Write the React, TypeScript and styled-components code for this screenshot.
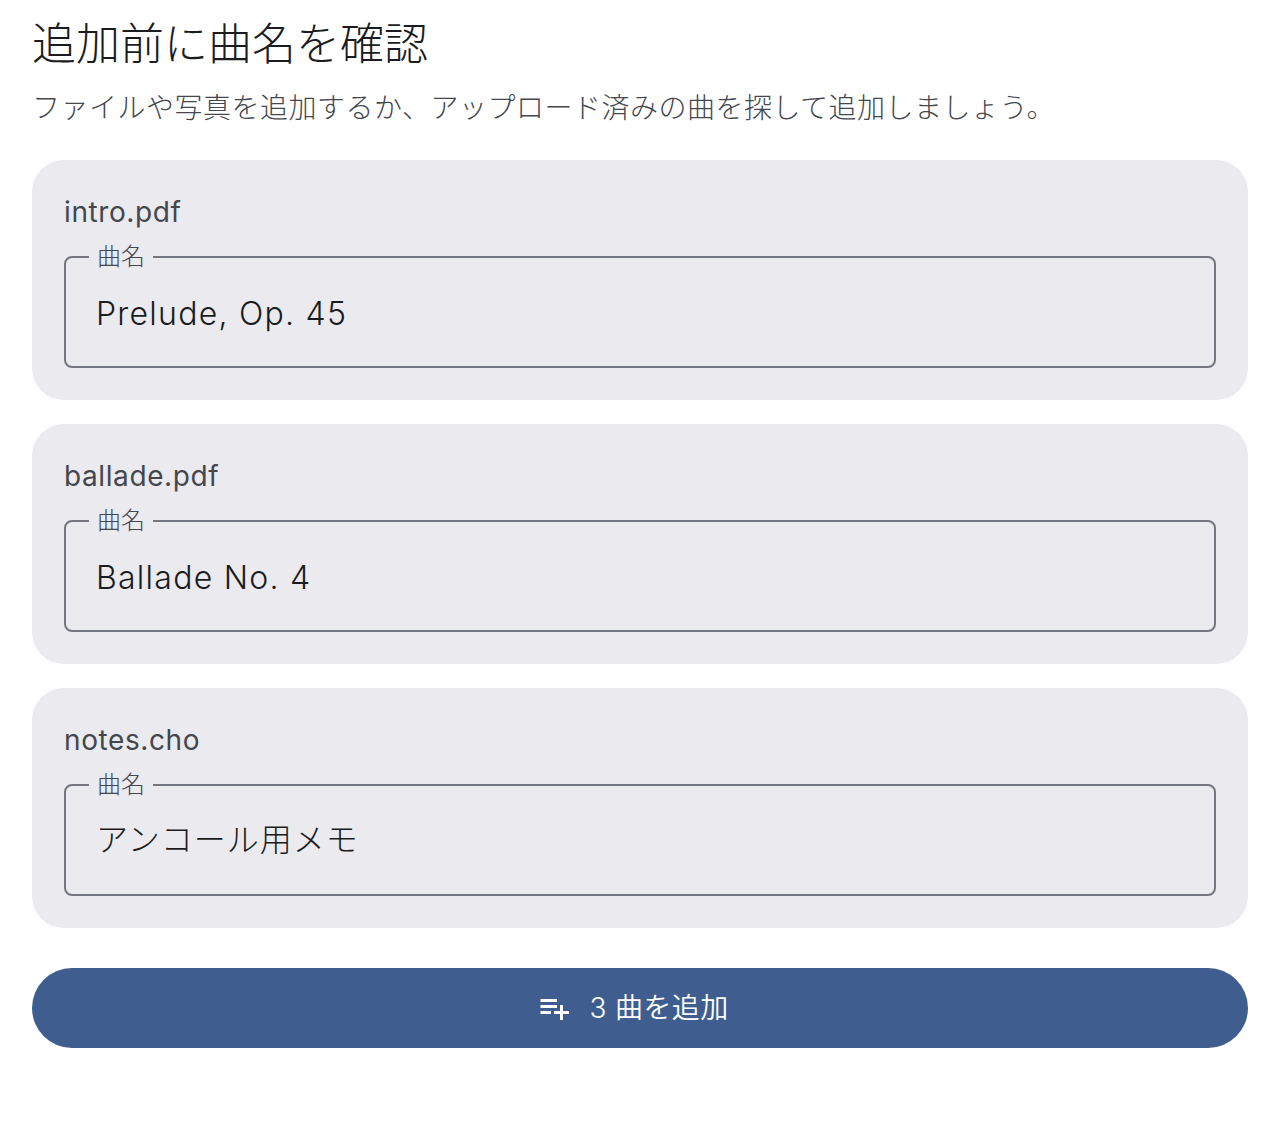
import styled, { createGlobalStyle } from "styled-components";
import { MdPlaylistAdd } from "react-icons/md";

const songs = [
  { file: "intro.pdf", title: "Prelude, Op. 45", cjk: false },
  { file: "ballade.pdf", title: "Ballade No. 4", cjk: false },
  { file: "notes.cho", title: "アンコール用メモ", cjk: true },
];

const App = () => {
  return (
    <Page>
      <GlobalStyle />
      <Title>追加前に曲名を確認</Title>
      <Subtitle>ファイルや写真を追加するか、アップロード済みの曲を探して追加しましょう。</Subtitle>
      <CardList>
        {songs.map((song) => (
          <Card key={song.file}>
            <FileName>{song.file}</FileName>
            <Field>
              <FieldLabel>曲名</FieldLabel>
              <FieldInput $cjk={song.cjk} defaultValue={song.title} aria-label="曲名" />
            </Field>
          </Card>
        ))}
      </CardList>
      <AddButton>
        <MdPlaylistAdd className="icon" />
        <ButtonLabel>3 曲を追加</ButtonLabel>
      </AddButton>
    </Page>
  );
};

export default App;

const GlobalStyle = createGlobalStyle`
  html, body {
    margin: 0;
    padding: 0;
    background: #FFFFFF;
  }
  body {
    font-family: "Inter", "Noto Sans CJK JP", sans-serif;
  }
`;

const Page = styled.main`
  box-sizing: border-box;
  width: 1280px;
  height: 1128px;
  padding: 16px 32px 0;
  font-family: "Inter", "Noto Sans CJK JP", sans-serif;
`;

const Title = styled.h1`
  margin: 0;
  font-size: 44px;
  line-height: 56px;
  font-weight: 300;
  color: #1A1C20;
`;

const Subtitle = styled.p`
  margin: 16px 0 0;
  font-size: 28px;
  line-height: 40px;
  font-weight: 300;
  letter-spacing: 0.5px;
  color: #44474E;
`;

const CardList = styled.div`
  display: flex;
  flex-direction: column;
  gap: 24px;
  margin-top: 32px;
`;

const Card = styled.section`
  box-sizing: border-box;
  height: 240px;
  padding: 32px;
  background: #EBEAEF;
  border-radius: 32px;
`;

const FileName = styled.div`
  margin-bottom: 9px;
  font-size: 28px;
  line-height: 40px;
  letter-spacing: 0.6px;
  color: #44474E;
`;

const Field = styled.fieldset`
  box-sizing: border-box;
  height: 127px;
  margin: 0;
  padding: 0 23px 8px;
  border: 2px solid #74777F;
  border-radius: 8px;
  min-width: 0;
`;

const FieldLabel = styled.legend`
  padding: 0 8px;
  font-size: 24px;
  line-height: 32px;
  font-weight: 300;
  color: #44474E;
`;

const FieldInput = styled.input<{ $cjk: boolean }>`
  display: block;
  width: 100%;
  height: 80px;
  margin: 0;
  padding: 0 8px ${(p) => (p.$cjk ? "8px" : "0")} 7px;
  box-sizing: border-box;
  border: 0;
  outline: 0;
  background: transparent;
  font-family: inherit;
  font-size: 32px;
  font-weight: ${(p) => (p.$cjk ? 300 : 350)};
  letter-spacing: ${(p) => (p.$cjk ? "1px" : "1.25px")};
  color: #1A1C20;
`;

const AddButton = styled.button`
  display: flex;
  align-items: center;
  justify-content: center;
  gap: 17px;
  width: 100%;
  height: 80px;
  margin-top: 40px;
  padding: 0 15px 0 0;
  border: 0;
  border-radius: 40px;
  background: #3F5E8F;
  color: #FFFFFF;
  font-family: inherit;
  font-size: 28px;
  font-weight: 350;
  letter-spacing: 0.4px;

  .icon {
    width: 36px;
    height: 36px;
  }
`;

const ButtonLabel = styled.span`
  padding-bottom: 4px;
`;
